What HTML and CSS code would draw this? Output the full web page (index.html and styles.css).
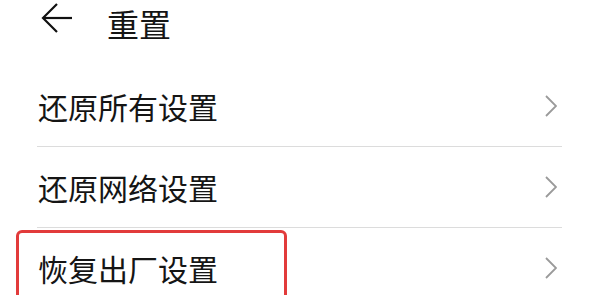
FILE: index.html
```html
<!DOCTYPE html>
<html lang="zh-CN">
<head>
  <meta charset="UTF-8">
  <meta name="viewport" content="width=device-width, initial-scale=1.0">
  <title>重置</title>
  <link rel="stylesheet" href="styles.css">
</head>
<body>
  <div class="header">
    <svg class="back" width="32" height="32" viewBox="0 0 32 32">
      <line x1="2" y1="16" x2="31" y2="16" stroke="#111" stroke-width="2.2"/>
      <polyline points="16,2 2,16 16,30" fill="none" stroke="#111" stroke-width="2.2"/>
    </svg>
    <h1 class="title">重置</h1>
  </div>

  <div class="list">
    <div class="item">
      <span class="label">还原所有设置</span>
      <svg class="chevron" width="12" height="22" viewBox="0 0 12 22">
        <polyline points="1,1 11,11 1,21" fill="none" stroke="#9a9a9a" stroke-width="1.8"/>
      </svg>
    </div>
    <div class="item">
      <span class="label">还原网络设置</span>
      <svg class="chevron" width="12" height="22" viewBox="0 0 12 22">
        <polyline points="1,1 11,11 1,21" fill="none" stroke="#9a9a9a" stroke-width="1.8"/>
      </svg>
    </div>
    <div class="item">
      <span class="label">恢复出厂设置</span>
      <svg class="chevron" width="12" height="22" viewBox="0 0 12 22">
        <polyline points="1,1 11,11 1,21" fill="none" stroke="#9a9a9a" stroke-width="1.8"/>
      </svg>
    </div>
  </div>

  <div class="highlight"></div>
</body>
</html>
```

FILE: styles.css
```css
html, body {
  height: 100%;
}

body {
  margin: 0;
  background-color: #ffffff;
  font-family: "Noto Sans CJK SC", "Noto Sans", sans-serif;
  color: #151515;
  overflow: hidden;
  position: relative;
}

.header {
  display: flex;
  align-items: flex-start;
  height: 46px;
  padding-left: 41px;
}

.back {
  margin-top: 2px;
}

.title {
  margin: 0 0 0 34px;
  font-size: 32px;
  font-weight: normal;
  line-height: 46px;
}

.list {
  margin-top: 20px;
  padding: 0 29px 0 37px;
}

.item {
  display: flex;
  align-items: center;
  justify-content: space-between;
  height: 80px;
  border-bottom: 1px solid #dcdcdc;
  padding-right: 5px;
}

.label {
  font-size: 30px;
  padding-left: 1px;
  line-height: 44px;
}

.highlight {
  position: absolute;
  left: 16px;
  top: 230px;
  width: 265px;
  bottom: -10px;
  border: 3px solid #e23b3b;
  border-radius: 6px;
}
```
